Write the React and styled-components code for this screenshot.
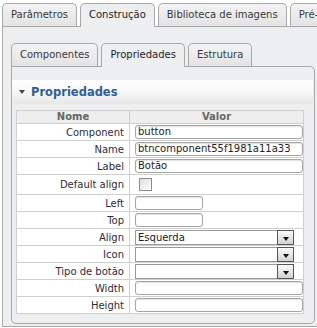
import React from 'react';
import styled, { createGlobalStyle } from 'styled-components';

const GlobalStyle = createGlobalStyle`
  html, body {
    margin: 0;
    padding: 0;
    background: #ffffff;
    overflow: hidden;
  }
  body {
    font-family: "DejaVu Sans", Verdana, sans-serif;
    font-size: 10px;
    color: #333;
  }
`;

const Page = styled.div`
  width: 317px;
  height: 328px;
  overflow: hidden;
  padding: 3px 0 0 2px;
  box-sizing: border-box;
`;

const TabRow = styled.div`
  display: flex;
  gap: 3px;
  position: relative;
  z-index: 1;
  white-space: nowrap;
`;

const Tab = styled.div`
  flex: none;
  height: ${(p) => (p.$active ? '23px' : '22px')};
  margin-bottom: ${(p) => (p.$active ? '-1px' : '0')};
  padding: 0 8px;
  line-height: 22px;
  border: 1px solid #a9a9a9;
  border-bottom: none;
  border-radius: 5px 5px 0 0;
  color: ${(p) => (p.$active ? '#1e1e1e' : '#3a3a3a')};
  background: ${(p) =>
    p.$active
      ? '#eceeef'
      : 'linear-gradient(#f3f3f3, #e3e3e3)'};
`;

const OuterPanel = styled.div`
  width: 360px;
  border: 1px solid #a9a9a9;
  background: #eceeef;
  padding: 16px 0 2px 8px;
`;

const InnerPanel = styled.div`
  width: 301px;
  border: 1px solid #a9a9a9;
  border-radius: 0 5px 5px 5px;
  background: #eceeef;
  padding: 13px 1px 9px 0;
  box-sizing: content-box;
`;

const SectionBar = styled.div`
  display: flex;
  align-items: center;
  gap: 6px;
  height: 24px;
  padding-left: 7px;
  background: linear-gradient(#ffffff 0%, #f9f9f9 40%, #e7e7e7 100%);
  color: #2f5d98;
  font-weight: bold;
  font-size: 11.5px;
`;

const Caret = styled.span`
  width: 0;
  height: 0;
  border-left: 3.5px solid transparent;
  border-right: 3.5px solid transparent;
  border-top: 4px solid #444;
`;

const Grid = styled.table`
  margin: 6px 8px 0 4px;
  width: 288px;
  border-collapse: collapse;
  background: #ffffff;
  border: 1px solid #cfcfcf;
  table-layout: fixed;
`;

const HeadCell = styled.th`
  height: 12px;
  padding: 0;
  line-height: 12px;
  background: #eeeeee;
  color: #666;
  font-weight: bold;
  text-align: center;
  border: 1px solid #cfcfcf;
`;

const NameCell = styled.td`
  width: 112px;
  height: ${(p) => (p.$tall ? '19px' : '16px')};
  padding: 0 5px 0 0;
  text-align: right;
  color: #2c2c3c;
  border: 1px solid #cfcfcf;
  white-space: nowrap;
`;

const ValueCell = styled.td`
  padding: 0 0 0 5px;
  border: 1px solid #cfcfcf;
  vertical-align: middle;
`;

const TextInput = styled.div`
  box-sizing: border-box;
  width: ${(p) => (p.$short ? '68px' : '168px')};
  height: 14px;
  border: 1px solid #a5a5a5;
  border-radius: 3px;
  box-shadow: inset 0 1px 1px rgba(0, 0, 0, 0.12);
  background: #fff;
  padding: 0 2px;
  line-height: 12px;
  color: #222;
  white-space: nowrap;
  overflow: hidden;
`;

const Check = styled.span`
  display: block;
  width: 11px;
  height: 11px;
  margin-left: 4px;
  border: 1px solid #8e8e8e;
  background: linear-gradient(135deg, #dcdcdc, #ffffff);
`;

const Select = styled.div`
  box-sizing: border-box;
  display: flex;
  align-items: stretch;
  width: 159px;
  height: 15px;
  border: 1px solid #9a9a9a;
  background: #fff;
`;

const SelectText = styled.span`
  flex: 1;
  padding-left: 2px;
  line-height: 13px;
  color: #222;
`;

const DropButton = styled.span`
  flex: none;
  width: 15px;
  margin: -1px -1px -1px 0;
  border: 1px solid #555;
  background: linear-gradient(#fafafa, #d2d2d2);
  display: flex;
  align-items: center;
  justify-content: center;
  &::after {
    content: '';
    width: 0;
    height: 0;
    margin-top: 3px;
    border-left: 3.5px solid transparent;
    border-right: 3.5px solid transparent;
    border-top: 4px solid #111;
  }
`;

const rows = [
  { name: 'Component', type: 'text', value: 'button' },
  { name: 'Name', type: 'text', value: 'btncomponent55f1981a11a33' },
  { name: 'Label', type: 'text', value: 'Botão' },
  { name: 'Default align', type: 'check' },
  { name: 'Left', type: 'short', value: '' },
  { name: 'Top', type: 'short', value: '' },
  { name: 'Align', type: 'select', value: 'Esquerda' },
  { name: 'Icon', type: 'select', value: '' },
  { name: 'Tipo de botão', type: 'select', value: '' },
  { name: 'Width', type: 'text', value: '' },
  { name: 'Height', type: 'text', value: '' },
];

function Field({ row }) {
  if (row.type === 'check') return <Check />;
  if (row.type === 'select')
    return (
      <Select>
        <SelectText>{row.value}</SelectText>
        <DropButton />
      </Select>
    );
  return <TextInput $short={row.type === 'short'}>{row.value}</TextInput>;
}

export default function App() {
  return (
    <Page>
      <GlobalStyle />
      <TabRow>
        <Tab>Parâmetros</Tab>
        <Tab $active>Construção</Tab>
        <Tab>Biblioteca de imagens</Tab>
        <Tab>Pré-visualização</Tab>
      </TabRow>
      <OuterPanel>
        <TabRow>
          <Tab>Componentes</Tab>
          <Tab $active>Propriedades</Tab>
          <Tab>Estrutura</Tab>
        </TabRow>
        <InnerPanel>
          <SectionBar>
            <Caret />
            Propriedades
          </SectionBar>
          <Grid>
            <thead>
              <tr>
                <HeadCell style={{ width: 112 }}>Nome</HeadCell>
                <HeadCell>Valor</HeadCell>
              </tr>
            </thead>
            <tbody>
              {rows.map((row) => (
                <tr key={row.name}>
                  <NameCell $tall={row.type === 'check'}>{row.name}</NameCell>
                  <ValueCell>
                    <Field row={row} />
                  </ValueCell>
                </tr>
              ))}
            </tbody>
          </Grid>
        </InnerPanel>
      </OuterPanel>
    </Page>
  );
}
